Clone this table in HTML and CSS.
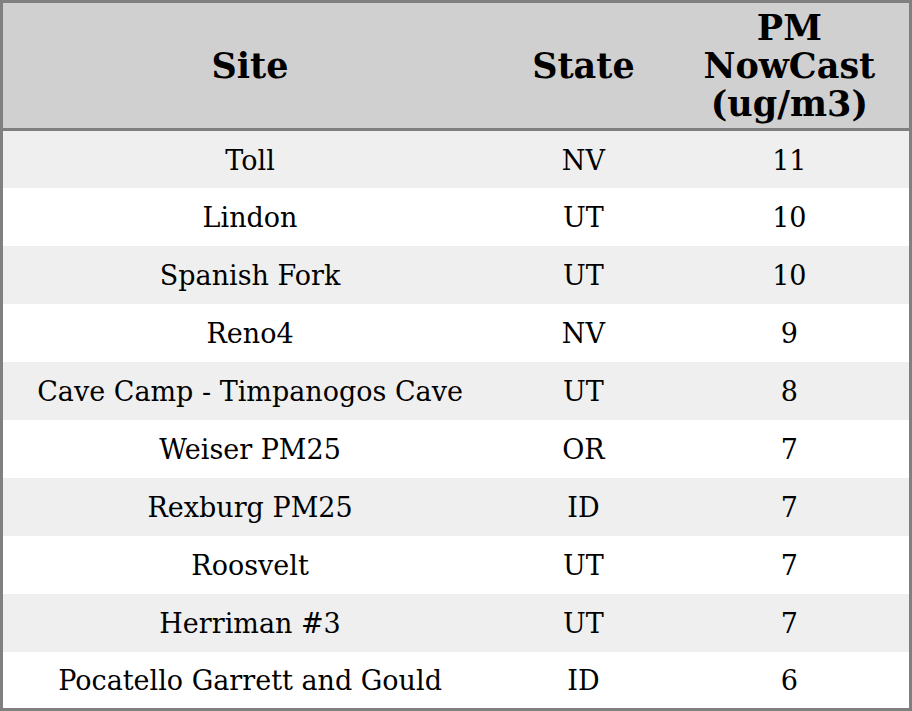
FILE: index.html
```html
<!DOCTYPE html>
<html>
<head>
<meta charset="utf-8">
<link rel="stylesheet" href="styles.css">
</head>
<body>
<table class="grid">
  <colgroup>
    <col class="c-site">
    <col class="c-state">
    <col class="c-pm">
  </colgroup>
  <thead>
    <tr class="head"><th>Site</th><th>State</th><th>PM<br>NowCast<br>(ug/m3)</th></tr>
  </thead>
  <tbody>
    <tr class="odd"><td>Toll</td><td>NV</td><td>11</td></tr>
    <tr><td>Lindon</td><td>UT</td><td>10</td></tr>
    <tr class="odd"><td>Spanish Fork</td><td>UT</td><td>10</td></tr>
    <tr><td>Reno4</td><td>NV</td><td>9</td></tr>
    <tr class="odd"><td>Cave Camp - Timpanogos Cave</td><td>UT</td><td>8</td></tr>
    <tr><td>Weiser PM25</td><td>OR</td><td>7</td></tr>
    <tr class="odd"><td>Rexburg PM25</td><td>ID</td><td>7</td></tr>
    <tr><td>Roosvelt</td><td>UT</td><td>7</td></tr>
    <tr class="odd"><td>Herriman #3</td><td>UT</td><td>7</td></tr>
    <tr><td>Pocatello Garrett and Gould</td><td>ID</td><td>6</td></tr>
  </tbody>
</table>
</body>
</html>
```
FILE: styles.css
```css
html, body {
  margin: 0;
  padding: 0;
  background: #ffffff;
}
.grid {
  width: 912px;
  height: 711px;
  border-collapse: collapse;
  table-layout: fixed;
  border: 3px solid #808080;
  font-family: "DejaVu Serif", serif;
  color: #000;
}
.c-site { width: 494px; }
.c-state { width: 172px; }
.c-pm { width: 240px; }
.head {
  background: #d0d0d0;
  height: 128px;
}
.head th {
  font-size: 35px;
  font-weight: bold;
  text-align: center;
  vertical-align: middle;
  padding: 0;
  line-height: 38px;
  border-bottom: 3px solid #808080;
}
tbody tr { height: 58px; }
tbody td {
  font-size: 27px;
  text-align: center;
  vertical-align: middle;
  padding: 3px 0 0;
  line-height: 32px;
}
tr.odd { background: #efefef; }
```
